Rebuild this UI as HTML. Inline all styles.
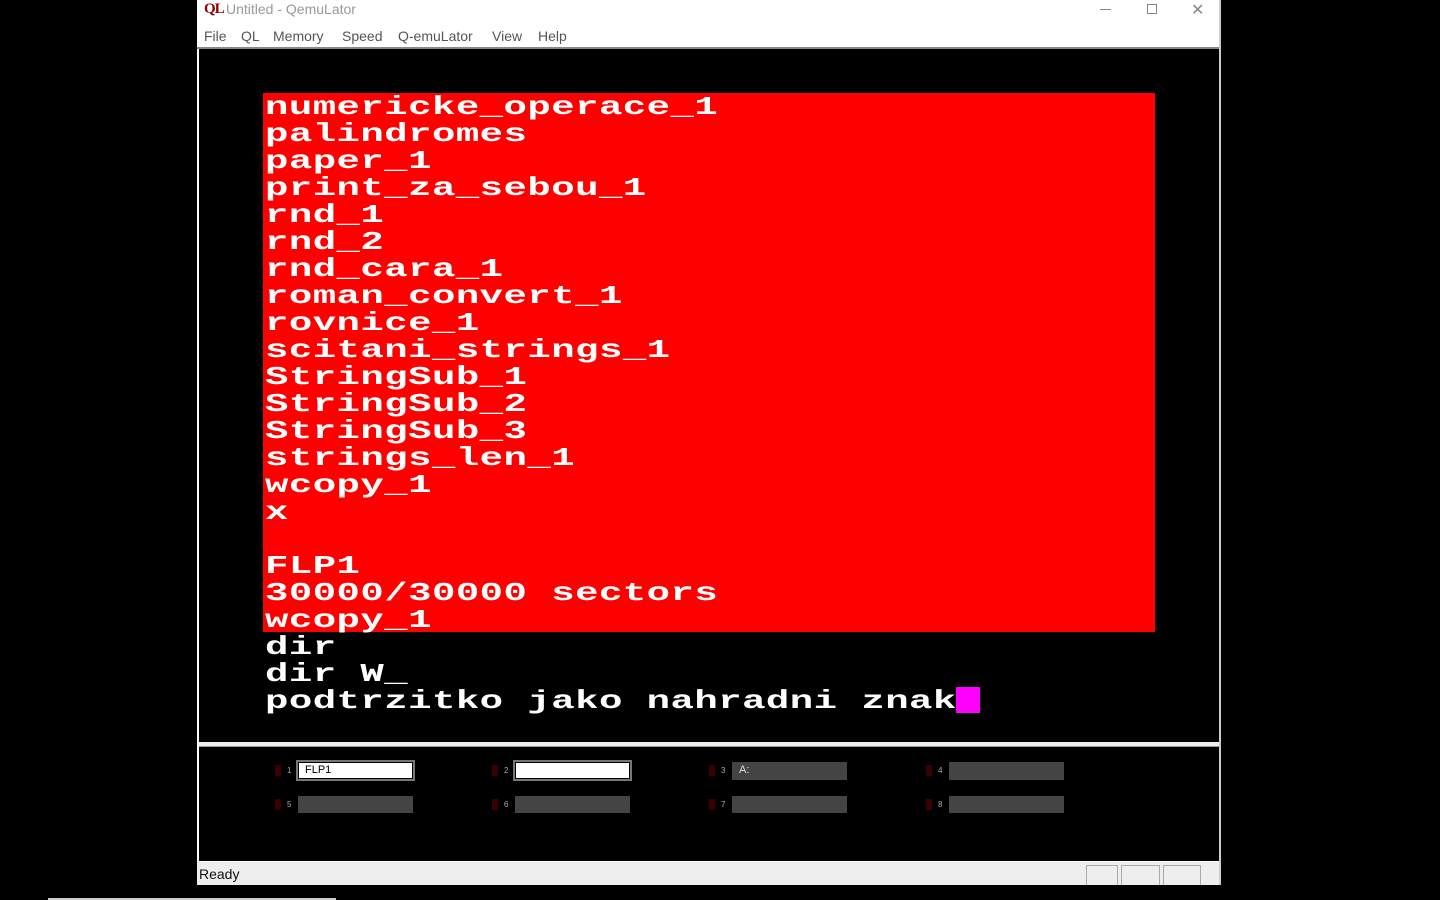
<!DOCTYPE html>
<html><head><meta charset="utf-8"><style>
*{margin:0;padding:0;box-sizing:border-box}
body{width:1440px;height:900px;background:#000;position:relative;overflow:hidden;font-family:"Liberation Sans",sans-serif}
.a{position:absolute}
#win{left:197px;top:0;width:1024px;height:885px;background:#fff}
.m{position:absolute;top:28px;font-size:14px;color:#555}
.scr{left:199px;top:49px;width:1020px;height:693px;background:#000}
.red{left:263px;top:93px;width:892px;height:539px;background:#f00}
pre{position:absolute;left:265px;top:94px;font-family:"Liberation Mono",monospace;font-weight:bold;font-size:26px;line-height:27px;letter-spacing:0.3px;color:#fff;transform:scaleX(1.5);transform-origin:0 0}
.led{width:6px;height:11px;background:#3a0000}
.num{font-size:8px;color:#aaa}
.box{height:18px;background:#444}
.wb{height:21px;background:#fff;border:2px solid #777;outline:1px solid #000;outline-offset:-3px;font-size:11px;padding-left:7px;line-height:16px;color:#000}
</style></head><body>
<div id="win" class="a"></div>
<div class="a" style="left:204px;top:1px;font:bold 15px 'Liberation Serif',serif;color:#8b0000;letter-spacing:-1px">QL</div>
<div class="a" style="left:226px;top:1px;font-size:14px;color:#999">Untitled - QemuLator</div>
<div class="a" style="left:1100px;top:9px;width:11px;height:1px;background:#888"></div>
<div class="a" style="left:1147px;top:4px;width:10px;height:10px;border:1px solid #888"></div>
<div class="a" style="left:1191px;top:0px;font-size:16px;color:#888">✕</div>
<span class="m" style="left:204px">File</span><span class="m" style="left:241px">QL</span><span class="m" style="left:273px">Memory</span><span class="m" style="left:342px">Speed</span><span class="m" style="left:398px">Q-emuLator</span><span class="m" style="left:492px">View</span><span class="m" style="left:538px">Help</span>
<div class="a" style="left:197px;top:47px;width:1024px;height:2px;background:#888"></div>
<div class="a scr"></div>
<div class="a red"></div>
<pre>numericke_operace_1
palindromes
paper_1
print_za_sebou_1
rnd_1
rnd_2
rnd_cara_1
roman_convert_1
rovnice_1
scitani_strings_1
StringSub_1
StringSub_2
StringSub_3
strings_len_1
wcopy_1
x

FLP1
30000/30000 sectors
wcopy_1
dir
dir W_
podtrzitko jako nahradni znak</pre>
<div class="a" style="left:956px;top:687px;width:24px;height:26px;background:#f0f"></div>
<div class="a" style="left:199px;top:742px;width:1020px;height:5px;background:#eee;border-bottom:1px solid #999"></div>
<div class="a" style="left:199px;top:747px;width:1020px;height:114px;background:#000"></div>

<div class="a led" style="left:275px;top:765px"></div><div class="a num" style="left:287px;top:766px">1</div>
<div class="a wb" style="left:296px;top:760px;width:119px">FLP1</div>
<div class="a led" style="left:492px;top:765px"></div><div class="a num" style="left:504px;top:766px">2</div>
<div class="a wb" style="left:513px;top:760px;width:119px"></div>
<div class="a led" style="left:709px;top:765px"></div><div class="a num" style="left:721px;top:766px">3</div>
<div class="a box" style="left:732px;top:762px;width:115px;color:#ddd;font-size:11px;padding:2px 0 0 7px">A:</div>
<div class="a led" style="left:926px;top:765px"></div><div class="a num" style="left:938px;top:766px">4</div>
<div class="a box" style="left:949px;top:762px;width:115px"></div>

<div class="a led" style="left:275px;top:799px"></div><div class="a num" style="left:287px;top:800px">5</div>
<div class="a box" style="left:298px;top:796px;width:115px;height:17px"></div>
<div class="a led" style="left:492px;top:799px"></div><div class="a num" style="left:504px;top:800px">6</div>
<div class="a box" style="left:515px;top:796px;width:115px;height:17px"></div>
<div class="a led" style="left:709px;top:799px"></div><div class="a num" style="left:721px;top:800px">7</div>
<div class="a box" style="left:732px;top:796px;width:115px;height:17px"></div>
<div class="a led" style="left:926px;top:799px"></div><div class="a num" style="left:938px;top:800px">8</div>
<div class="a box" style="left:949px;top:796px;width:115px;height:17px"></div>

<div class="a" style="left:197px;top:861px;width:1024px;height:24px;background:#eee;border-top:1px solid #fff"></div>
<div class="a" style="left:199px;top:866px;font-size:14px;color:#111">Ready</div>
<div class="a" style="left:1086px;top:865px;width:32px;height:20px;border:1px solid #aaa;border-bottom:none"></div>
<div class="a" style="left:1121px;top:865px;width:39px;height:20px;border:1px solid #aaa;border-bottom:none"></div>
<div class="a" style="left:1163px;top:865px;width:38px;height:20px;border:1px solid #aaa;border-bottom:none"></div>
<div class="a" style="left:1219px;top:0;width:2px;height:885px;background:#ccc"></div>
<div class="a" style="left:48px;top:898px;width:288px;height:2px;background:#ccc"></div>
</body></html>
